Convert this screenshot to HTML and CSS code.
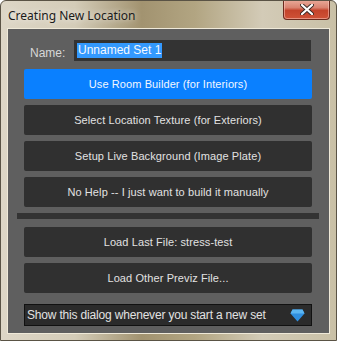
FILE: index.html
```html
<!DOCTYPE html>
<html lang="en">
<head>
    <meta charset="UTF-8">
    <meta name="viewport" content="width=device-width, initial-scale=1.0">
    <title>Creating New Location</title>
    <link rel="stylesheet" href="styles.css">
</head>
<body>
    <div class="window">
        <div class="titlebar">
            <span class="title">Creating New Location</span>
            <button class="close">
                <svg width="14" height="11" viewBox="0 0 14 11">
                    <path d="M2 1 L12 10 M12 1 L2 10" stroke="#3a2a26" stroke-width="4" stroke-linecap="round"/>
                    <path d="M2 1 L12 10 M12 1 L2 10" stroke="#ffffff" stroke-width="2.2" stroke-linecap="round"/>
                </svg>
            </button>
        </div>

        <div class="client">
            <div class="name-row">
                <label class="name-label">Name:</label>
                <div class="name-input"><span class="selected">Unnamed Set 1</span></div>
            </div>

            <button class="btn primary">Use Room Builder (for Interiors)</button>
            <button class="btn">Select Location Texture (for Exteriors)</button>
            <button class="btn">Setup Live Background (Image Plate)</button>
            <button class="btn">No Help -- I just want to build it manually</button>

            <div class="separator"></div>

            <button class="btn after-sep">Load Last File: stress-test</button>
            <button class="btn">Load Other Previz File...</button>

            <div class="check-row">
                <span>Show this dialog whenever you start a new set</span>
                <svg class="arrow" width="15" height="13" viewBox="0 0 15 13">
                    <path d="M2.5 0.5 L12.5 0.5 L14.5 4.5 L7.5 12.5 L0.5 4.5 Z" fill="#2f8fe0"/>
                    <path d="M2.5 0.5 L12.5 0.5 L14.5 4.5 L0.5 4.5 Z" fill="#5cb6f2"/>
                </svg>
            </div>
        </div>
    </div>
</body>
</html>
```

FILE: styles.css
```css
body {
    margin: 0;
    padding: 0;
    background: #ffffff;
}

.window {
    width: 337px;
    height: 341px;
    box-sizing: border-box;
    border: 1px solid #5a5345;
    border-radius: 6px 6px 0 0;
    background: linear-gradient(to right, #ddd6c6 0%, #d4ccb8 22%, #a29370 42%, #b2a582 58%, #d3cbb7 78%, #c9c0a6 100%);
    overflow: hidden;
}

.titlebar {
    height: 28px;
    display: flex;
    align-items: flex-start;
    justify-content: space-between;
}

.title {
    font-family: "Noto Sans", "Open Sans", sans-serif;
    font-size: 12px;
    color: #1b1b1b;
    margin: 6px 0 0 7px;
    text-shadow: 0 0 6px rgba(255, 255, 255, 0.9);
}

.close {
    width: 47px;
    height: 20px;
    margin: -1px 6px 0 0;
    padding: 0;
    border: 1px solid #6b2a1e;
    border-top: none;
    border-radius: 0 0 4px 4px;
    background: linear-gradient(to bottom, #e9ab9b 0%, #d98370 40%, #c4432b 55%, #cf5237 100%);
    box-shadow: inset 0 0 0 1px rgba(255, 210, 200, 0.5);
    display: flex;
    align-items: center;
    justify-content: center;
}

.client {
    margin-left: 7px;
    width: 321px;
    height: 304px;
    box-sizing: border-box;
    background: #5f5f5f;
    box-shadow: 0 0 0 1px #efe9d8;
    padding: 11px 0 0 16px;
    display: flex;
    flex-direction: column;
    gap: 6px;
}

.name-row {
    display: flex;
    align-items: center;
    height: 21px;
    margin-bottom: 2px;
}

.name-label {
    font-family: "Liberation Sans", Arial, sans-serif;
    font-size: 12px;
    color: #d8d8d8;
    width: 44px;
    padding-left: 6px;
    margin-top: 4px;
}

.name-input {
    width: 237px;
    height: 21px;
    background: #333333;
    display: flex;
    align-items: center;
    padding-left: 3px;
    box-sizing: border-box;
}

.selected {
    font-family: "Liberation Sans", Arial, sans-serif;
    font-size: 12px;
    background: #3399ff;
    color: #f4f8ff;
    line-height: 15px;
    padding: 0 1px;
}

.btn {
    width: 288px;
    height: 30px;
    padding: 0;
    border: none;
    border-radius: 2px;
    background: #303030;
    color: #e2e2e2;
    font-family: "Liberation Sans", Arial, sans-serif;
    font-size: 11px;
    letter-spacing: 0.1px;
    text-align: center;
    flex-shrink: 0;
}

.btn.primary {
    background: #0a80ff;
    color: #f2f7ff;
}

.separator {
    height: 6px;
    width: 302px;
    margin-left: -7px;
    background: #333333;
    flex-shrink: 0;
}

.btn.after-sep {
    margin-top: 2px;
}

.check-row {
    width: 288px;
    height: 22px;
    margin-top: 5px;
    box-sizing: border-box;
    background: #2b2b2b;
    border: 1px solid #111111;
    display: flex;
    align-items: center;
    justify-content: space-between;
    padding: 0 6px 0 2px;
    font-family: "Liberation Sans", Arial, sans-serif;
    font-size: 12px;
    letter-spacing: -0.18px;
    color: #e2e2e2;
    flex-shrink: 0;
}
```
